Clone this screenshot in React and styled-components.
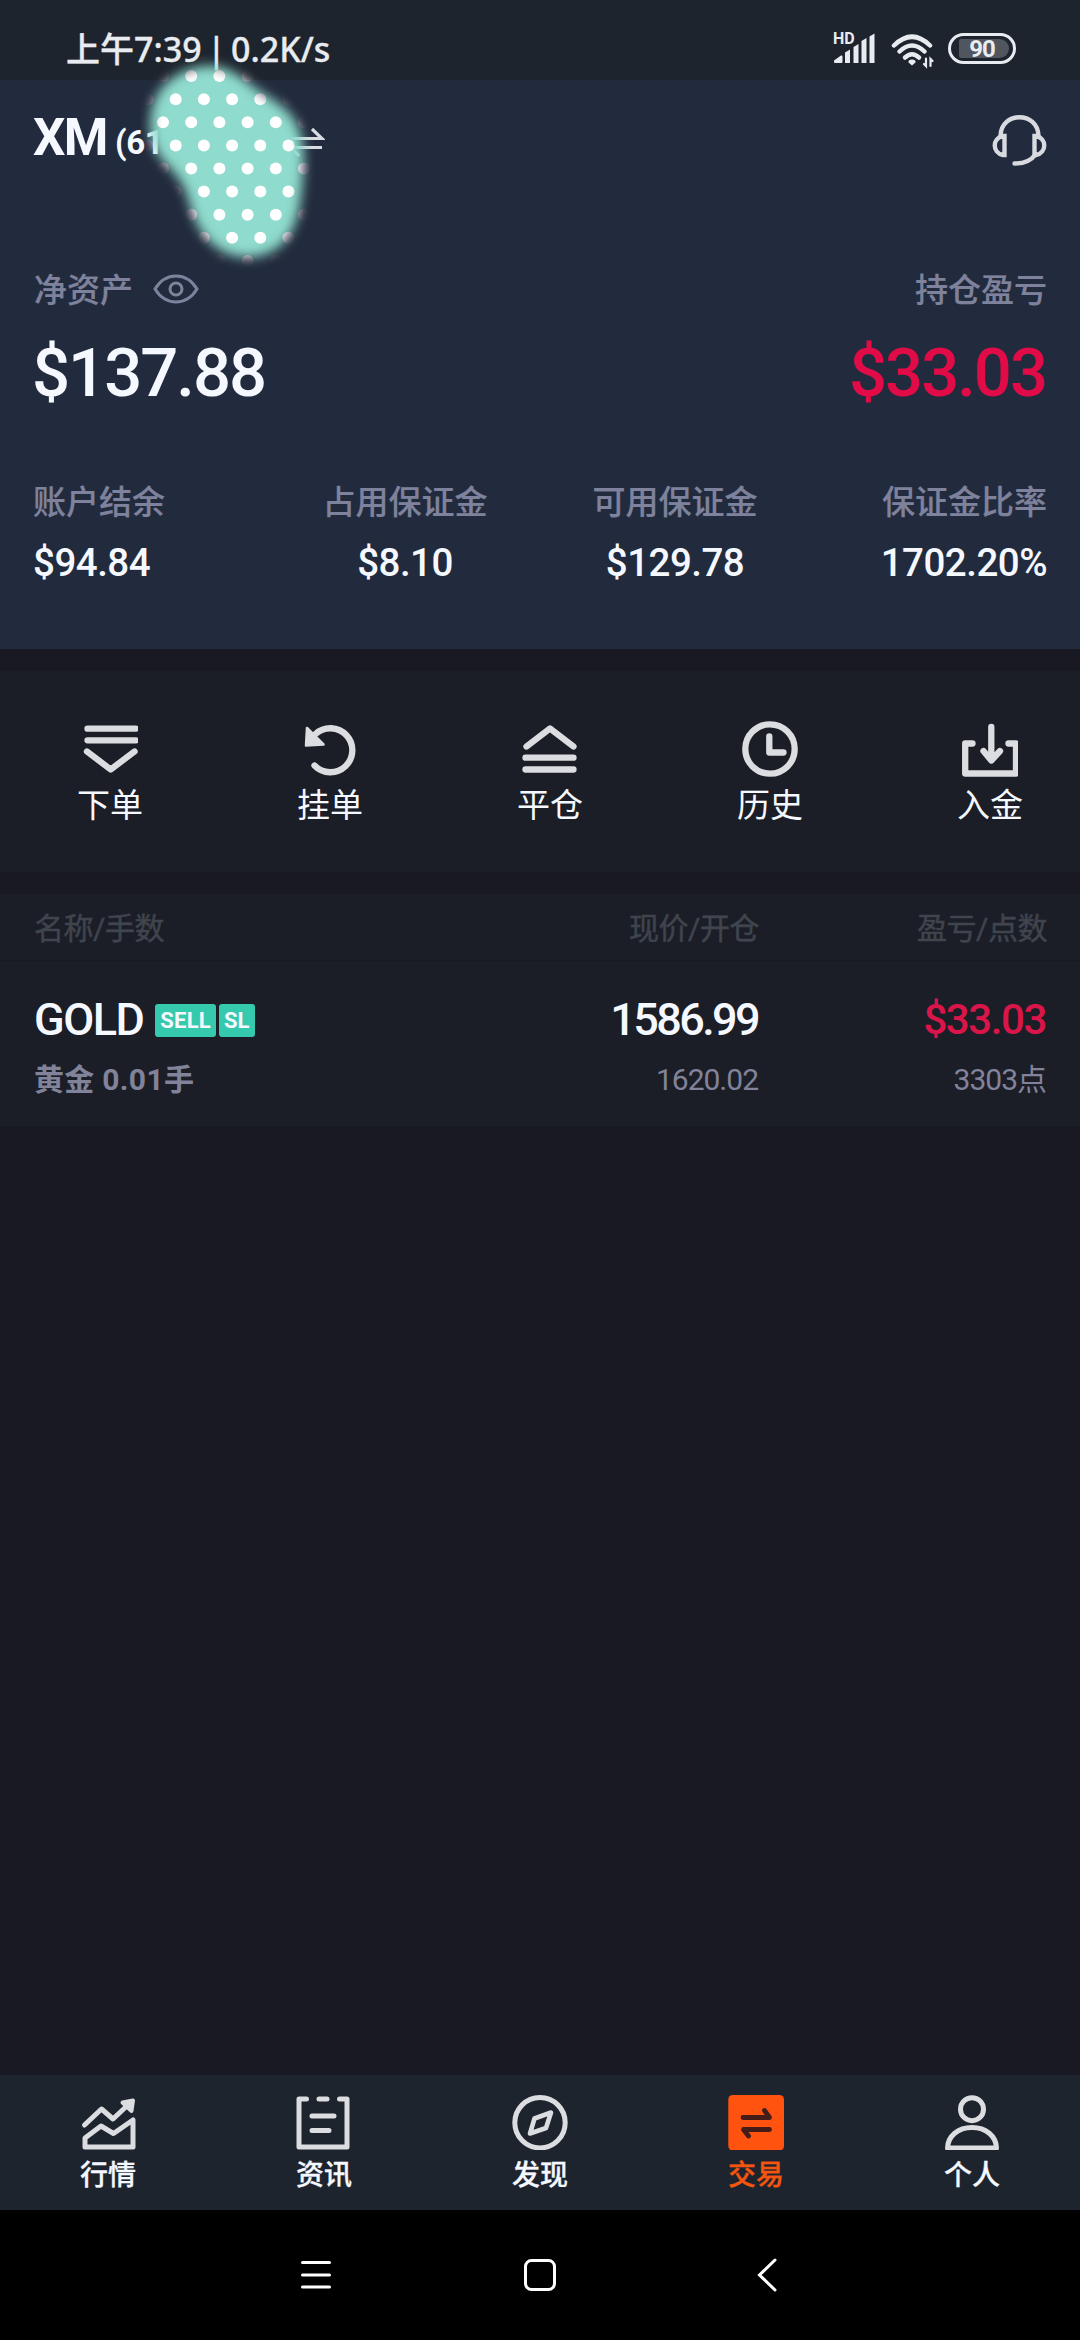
import React, { useState } from "react";
import styled, { createGlobalStyle } from "styled-components";

const GlobalStyle = createGlobalStyle`
  body {
    margin: 0;
    background: #181922;
  }
  * {
    box-sizing: border-box;
  }
`;

const summary = [
  { label: "账户结余", value: "$94.84", align: "flex-start" },
  { label: "占用保证金", value: "$8.10", align: "center" },
  { label: "可用保证金", value: "$129.78", align: "center" },
  { label: "保证金比率", value: "1702.20%", align: "flex-end" },
];

const OrderIcon = () => (
  <Icon viewBox="0 0 56 56" $stroke={6.3}>
    <path d="M5.5 7.7H54M5.5 19.3H54M5 30.5L28.7 48.5L52.5 30.5" />
  </Icon>
);

const PendingIcon = () => (
  <Icon viewBox="0 0 56 56" $stroke={6.3}>
    <path d="M12.5 44.5A22 22 0 1 0 13.5 13" />
    <path
      d="M5 7L4 24.5L21.5 23.5Z"
      fill="currentColor"
      strokeWidth="2.5"
    />
  </Icon>
);

const CloseIcon = () => (
  <Icon viewBox="0 0 56 56" $stroke={6.3}>
    <path d="M4.5 25.5L28 7.5L51.5 25.5M3.5 36.7H51.5M3.5 48.5H51.5" />
  </Icon>
);

const HistoryIcon = () => (
  <Icon viewBox="0 0 56 56" $stroke={6.3}>
    <circle cx="28" cy="28" r="24.7" />
    <path d="M27.3 15.5V31.5H41.5" />
  </Icon>
);

const DepositIcon = () => (
  <Icon viewBox="0 0 56 56" $stroke={6.3}>
    <path d="M10.5 22.5H3.2V52.5H54V22.5H46.5" />
    <path d="M29.3 6V39M21.5 30L29.3 39.5L38 30" />
  </Icon>
);

const MarketIcon = () => (
  <Icon viewBox="0 0 56 56" $stroke={5}>
    <path d="M4.5 31L21.5 15L33 25L50 9" />
    <path d="M42.5 8.5L53 6.5L51.5 17Z" fill="currentColor" strokeWidth="4" />
    <path d="M5 53V44L21 32L33.5 39.5L53 26V53Z" />
  </Icon>
);

const NewsIcon = () => (
  <Icon viewBox="0 0 56 56" $stroke={5}>
    <path d="M10.5 5H3V53H51V5H43.5M23 5H31M16 22H38M16 36.5H33" />
  </Icon>
);

const DiscoverIcon = () => (
  <Icon viewBox="0 0 56 56" $stroke={5}>
    <circle cx="28" cy="28.7" r="25.2" />
    <path d="M18 39.5L22.5 24.5L39 18.5L34 34Z" strokeWidth="4.6" />
  </Icon>
);

const TradeIcon = () => (
  <Icon viewBox="0 0 56 56" $stroke={4.8}>
    <rect x="0.3" y="1" width="55.7" height="55.5" rx="4.5" fill="#ff530f" stroke="none" />
    <path d="M15 23.5H41.5L36.5 16.5M41.5 35.5H15.5L20.5 42" stroke="#451d18" />
  </Icon>
);

const ProfileIcon = () => (
  <Icon viewBox="0 0 56 56" $stroke={5}>
    <circle cx="28" cy="15.2" r="11.5" />
    <path d="M3.5 54C4 42 14 33.5 28 33.5S52 42 52.5 54Z" />
  </Icon>
);

const actions = [
  { label: "下单", Glyph: OrderIcon },
  { label: "挂单", Glyph: PendingIcon },
  { label: "平仓", Glyph: CloseIcon },
  { label: "历史", Glyph: HistoryIcon },
  { label: "入金", Glyph: DepositIcon },
];

const tabs = [
  { label: "行情", Glyph: MarketIcon },
  { label: "资讯", Glyph: NewsIcon },
  { label: "发现", Glyph: DiscoverIcon },
  { label: "交易", Glyph: TradeIcon },
  { label: "个人", Glyph: ProfileIcon },
];

// rows of dots on the sticker, every second row is shifted by half a step
const dots = [];
for (let row = 0; row < 10; row++) {
  for (let col = 0; col < 7; col++) {
    dots.push({ x: (row % 2 ? 23 : 7.5) + col * 28.2, y: 16 + row * 23.1 });
  }
}

const Sticker = () => (
  <StickerSvg viewBox="0 0 200 240">
    <defs>
      <filter id="soft" x="-20%" y="-20%" width="140%" height="140%">
        <feGaussianBlur stdDeviation="6" />
      </filter>
      <mask id="blob">
        <path
          d="M65 29C85 27 101 39 115 51C132 63 150 70 158 90C166 110 164 130 162 152C160 174 156 192 144 205C130 221 103 225 84 215C65 205 54 186 49 165C45 148 36 137 24 125C10 110 7 86 13 68C20 45 42 31 65 29Z"
          fill="#fff"
          filter="url(#soft)"
        />
      </mask>
    </defs>
    <g mask="url(#blob)">
      <rect width="200" height="240" fill="#8fdbcd" />
      {dots.map((dot, i) => (
        <circle key={i} cx={dot.x} cy={dot.y} r="6" fill="#fff" />
      ))}
    </g>
  </StickerSvg>
);

const App = () => {
  const [active, setActive] = useState("交易");

  return (
    <Screen>
      <GlobalStyle />
      <StatusBar>
        <Clock>上午7:39 | 0.2K/s</Clock>
        <StatusIcons>
          <Signal>
            <Hd>HD</Hd>
            <svg width="42" height="32" viewBox="0 0 42 32" fill="currentColor">
              <path d="M0 30V28.5L7 23.5Q8.5 23 8.5 24.5V30Q8.5 31 7.5 31H1Q0 31 0 30ZM11 31V20.5L16 17.5V31ZM19.5 31V15L24.5 12V31ZM27.5 31V9L32.5 6V31ZM35.5 31V4.5L40.5 1.5V31Z" />
            </svg>
          </Signal>
          <WifiSvg viewBox="0 0 44 36">
            <path d="M3 12.5Q21 -5 39 12.5" />
            <path d="M8.5 18.5Q21 6.5 33.5 18.5" />
            <path d="M14 24.5Q21 18 28 24.5" />
            <path d="M21 26.5Q25 26.5 24.5 29.5L21 32.5L17.5 29.5Q17 26.5 21 26.5Z" fill="currentColor" stroke="none" />
            <path d="M35 25.5V33L33 31M39.5 33V26L41.5 28" strokeWidth="2.2" />
          </WifiSvg>
          <Battery>
            <Charge>90</Charge>
          </Battery>
        </StatusIcons>
      </StatusBar>

      <Account>
        <TitleRow>
          <Broker>XM</Broker>
          <AccountNo>(61</AccountNo>
          <SwapSvg viewBox="0 0 36 34">
            <path d="M2 13.5H33L23 4M33 22.5H2L10 31" />
          </SwapSvg>
          <HeadsetSvg viewBox="0 0 56 52">
            <path d="M8.5 22C9 -3 46 -3 46.5 22" />
            <path d="M12.5 22V41H11C0 39 0 24 11 22ZM42.5 22V41H44C55 39 55 24 44 22Z" />
            <path d="M43 41Q37 49.5 22.5 49.5" />
          </HeadsetSvg>
        </TitleRow>
        <Split>
          <Label>
            净资产
            <EyeSvg viewBox="0 0 46 32">
              <path d="M2 16Q10 3 23 3T44 16Q36 29 23 29T2 16Z" />
              <circle cx="23" cy="16" r="6" />
            </EyeSvg>
          </Label>
          <Label>持仓盈亏</Label>
        </Split>
        <Equity>
          <span>$137.88</span>
          <Profit>$33.03</Profit>
        </Equity>
        <Summary>
          {summary.map((item) => (
            <SummaryItem key={item.label} $align={item.align}>
              <Label>{item.label}</Label>
              <SummaryValue>{item.value}</SummaryValue>
            </SummaryItem>
          ))}
        </Summary>
      </Account>

      <Actions>
        {actions.map(({ label, Glyph }) => (
          <ActionButton type="button" key={label}>
            <Glyph />
            <ActionLabel>{label}</ActionLabel>
          </ActionButton>
        ))}
      </Actions>

      <Positions>
        <ColumnNames>
          <span>名称/手数</span>
          <span>现价/开仓</span>
          <span>盈亏/点数</span>
        </ColumnNames>
        <Position>
          <MainLine>
            <Symbol>
              <Ticker>GOLD</Ticker>
              <Tag>SELL</Tag>
              <Tag>SL</Tag>
            </Symbol>
            <span>1586.99</span>
            <RowProfit>$33.03</RowProfit>
          </MainLine>
          <SubLine>
            <Lots>黄金 0.01手</Lots>
            <span>1620.02</span>
            <span>3303点</span>
          </SubLine>
        </Position>
      </Positions>

      <TabBar>
        {tabs.map(({ label, Glyph }) => (
          <Tab
            type="button"
            key={label}
            $active={label === active}
            onClick={() => setActive(label)}
          >
            <Glyph />
            <TabLabel>{label}</TabLabel>
          </Tab>
        ))}
      </TabBar>

      <SystemNav>
        <SystemSvg viewBox="0 0 36 36">
          <path d="M4.5 5.5H31.5M4.5 18H31.5M4.5 30H31.5" />
        </SystemSvg>
        <SystemSvg viewBox="0 0 36 36">
          <rect x="3.5" y="3.5" width="29" height="29" rx="6" />
        </SystemSvg>
        <SystemSvg viewBox="0 0 36 36">
          <path d="M29 3L13.5 18L29 33" />
        </SystemSvg>
      </SystemNav>

      <Sticker />
    </Screen>
  );
};

const Screen = styled.div`
  position: relative;
  display: flex;
  flex-direction: column;
  width: 1080px;
  height: 2340px;
  overflow: hidden;
  background: #181922;
  color: #f5f8ff;
  font-family: Roboto, "Noto Sans CJK SC", sans-serif;
`;

const Icon = styled.svg`
  width: 56px;
  height: 56px;
  color: #dcdde0;
  fill: none;
  stroke: currentColor;
  stroke-width: ${(props) => props.$stroke}px;
  stroke-linecap: round;
  stroke-linejoin: round;
`;

const StatusBar = styled.div`
  display: flex;
  justify-content: space-between;
  height: 80px;
  padding: 29px 64px 0 66px;
  background: #1e242d;
  color: #e8ebf0;
`;

const Clock = styled.div`
  font-family: "Noto Sans", "Noto Sans CJK SC", sans-serif;
  font-size: 34px;
  font-weight: 500;
  line-height: 40px;
  word-spacing: -3.5px;
  -webkit-text-stroke: 0.3px;
`;

const StatusIcons = styled.div`
  display: flex;
  align-items: flex-start;
  padding-top: 3px;
`;

const Signal = styled.div`
  position: relative;
  width: 42px;
  height: 32px;
  margin-right: 15px;
`;

const Hd = styled.span`
  position: absolute;
  top: -1px;
  left: -1px;
  font-size: 16px;
  font-weight: 700;
  line-height: 16px;
`;

const WifiSvg = styled.svg`
  width: 44px;
  height: 36px;
  margin: 1px 13px 0 0;
  fill: none;
  stroke: currentColor;
  stroke-width: 4.5px;
  stroke-linecap: round;
`;

const Battery = styled.div`
  width: 68px;
  height: 31px;
  margin-top: 1px;
  padding: 3px 4px 3px 8px;
  border: 3px solid #e8ebf0;
  border-radius: 16px;
`;

const Charge = styled.div`
  height: 19px;
  border-radius: 2px 10px 10px 2px;
  background: #50555e;
  font-size: 24px;
  font-weight: 700;
  line-height: 20px;
  text-align: center;
  text-indent: -4px;
  letter-spacing: -1px;
`;

const Account = styled.header`
  height: 569px;
  padding-top: 27px;
  background: #222b3d;
`;

const TitleRow = styled.div`
  display: flex;
  align-items: center;
  height: 60px;
  padding: 0 32px 0 33px;
  font-weight: 700;
`;

const Broker = styled.span`
  margin-top: 2px;
  font-size: 51px;
  line-height: 60px;
  letter-spacing: -1.5px;
`;

const AccountNo = styled.span`
  width: 50px;
  margin: 11px 0 0 8px;
  font-size: 33px;
  font-weight: 700;
  line-height: 40px;
  letter-spacing: -0.4px;
`;

const SwapSvg = styled.svg`
  width: 36px;
  height: 34px;
  margin: 10px auto 0 124px;
  fill: none;
  stroke: #d8dbe2;
  stroke-width: 3.2px;
`;

const HeadsetSvg = styled.svg`
  width: 56px;
  height: 52px;
  margin-top: 6px;
  fill: none;
  stroke: #d8dae0;
  stroke-width: 4.4px;
  stroke-linecap: round;
`;

const Split = styled.div`
  display: flex;
  justify-content: space-between;
  margin-top: 104px;
  padding: 0 33px 0 34px;
`;

const Label = styled.div`
  display: flex;
  align-items: center;
  color: #7f829c;
  font-size: 33px;
  font-weight: 500;
  line-height: 40px;
  -webkit-text-stroke: 0.2px;
`;

const EyeSvg = styled.svg`
  width: 46px;
  height: 32px;
  margin: -4px 0 0 20px;
  fill: none;
  stroke: currentColor;
  stroke-width: 3px;
`;

const Equity = styled.div`
  display: flex;
  justify-content: space-between;
  margin-top: 27px;
  padding: 0 34px 0 32px;
  font-size: 67px;
  font-weight: 500;
  line-height: 70px;
  letter-spacing: -2px;
`;

const Profit = styled.span`
  color: #e10b48;
`;

const Summary = styled.div`
  display: flex;
  margin-top: 75px;
`;

const SummaryItem = styled.div`
  display: flex;
  flex-direction: column;
  align-items: ${(props) => props.$align};
  width: 270px;
  padding: ${(props) => (props.$align === "center" ? 0 : "0 33px")};
`;

const SummaryValue = styled.div`
  margin-top: 17px;
  font-size: 38.5px;
  font-weight: 500;
  line-height: 46px;
  letter-spacing: -0.5px;
`;

const Actions = styled.div`
  display: flex;
  height: 201px;
  margin-top: 22px;
  background: #1b1e26;
`;

const ActionButton = styled.button`
  display: flex;
  flex: 0 0 220px;
  flex-direction: column;
  align-items: center;
  padding: 50px 0 0;
  border: none;
  background: none;
  color: #f5f8ff;
  font-family: inherit;
`;

const ActionLabel = styled.span`
  margin-top: 9px;
  font-size: 33px;
  line-height: 40px;
`;

const Positions = styled.section`
  flex: 1;
  margin-top: 22px;
`;

const Row = styled.div`
  display: grid;
  grid-template-columns: 1fr 1fr 288px;
  padding: 0 34px;

  > :not(:first-child) {
    text-align: right;
  }
`;

const ColumnNames = styled(Row)`
  height: 67px;
  padding: 15px 33px 0 34px;
  border-bottom: 1px solid #171a21;
  background: #1b1e26;
  color: #3f444d;
  font-size: 30px;
  line-height: 40px;
  letter-spacing: -0.5px;
  -webkit-text-stroke: 0.5px;
`;

const Position = styled.div`
  height: 165px;
  padding-top: 33px;
  background: #1b1e26;
`;

const MainLine = styled(Row)`
  font-size: 45px;
  font-weight: 500;
  line-height: 51px;
  letter-spacing: -2.6px;
`;

const Symbol = styled.div`
  display: flex;
  align-items: center;
`;

const Ticker = styled.span`
  letter-spacing: -1.5px;
`;

const Tag = styled.span`
  height: 33px;
  margin: 2px 0 0 3px;
  padding: 0 5px;
  border-radius: 3px;
  background: #35c9ad;
  font-size: 22px;
  font-weight: 700;
  line-height: 34px;
  letter-spacing: 0.2px;

  &:nth-of-type(2) {
    margin-left: 12px;
  }
`;

const RowProfit = styled.span`
  color: #da1549;
  font-size: 42px;
  letter-spacing: -1.4px;
`;

const SubLine = styled(Row)`
  margin-top: 15px;
  color: #81839a;
  font-size: 30px;
  line-height: 40px;
  letter-spacing: -1px;
`;

const Lots = styled.span`
  font-weight: 700;
  letter-spacing: 0.3px;
`;

const TabBar = styled.nav`
  display: flex;
  height: 135px;
  background: #1e242e;
`;

const Tab = styled.button`
  display: flex;
  flex: 1;
  flex-direction: column;
  align-items: center;
  padding: 19px 0 0;
  border: none;
  background: none;
  color: ${(props) => (props.$active ? "#f4560f" : "#f5f8ff")};
  font-family: inherit;
`;

const TabLabel = styled.span`
  margin-top: 8px;
  font-size: 28px;
  font-weight: 500;
  line-height: 36px;
  -webkit-text-stroke: 0.3px;
`;

const SystemNav = styled.div`
  display: flex;
  align-items: center;
  justify-content: center;
  gap: 188px;
  height: 130px;
  background: #000;
`;

const SystemSvg = styled.svg`
  width: 36px;
  height: 36px;
  fill: none;
  stroke: #fff;
  stroke-width: 3px;
  stroke-linecap: round;
`;

const StickerSvg = styled.svg`
  position: absolute;
  top: 37px;
  left: 140px;
  width: 200px;
  height: 240px;
`;

export default App;
